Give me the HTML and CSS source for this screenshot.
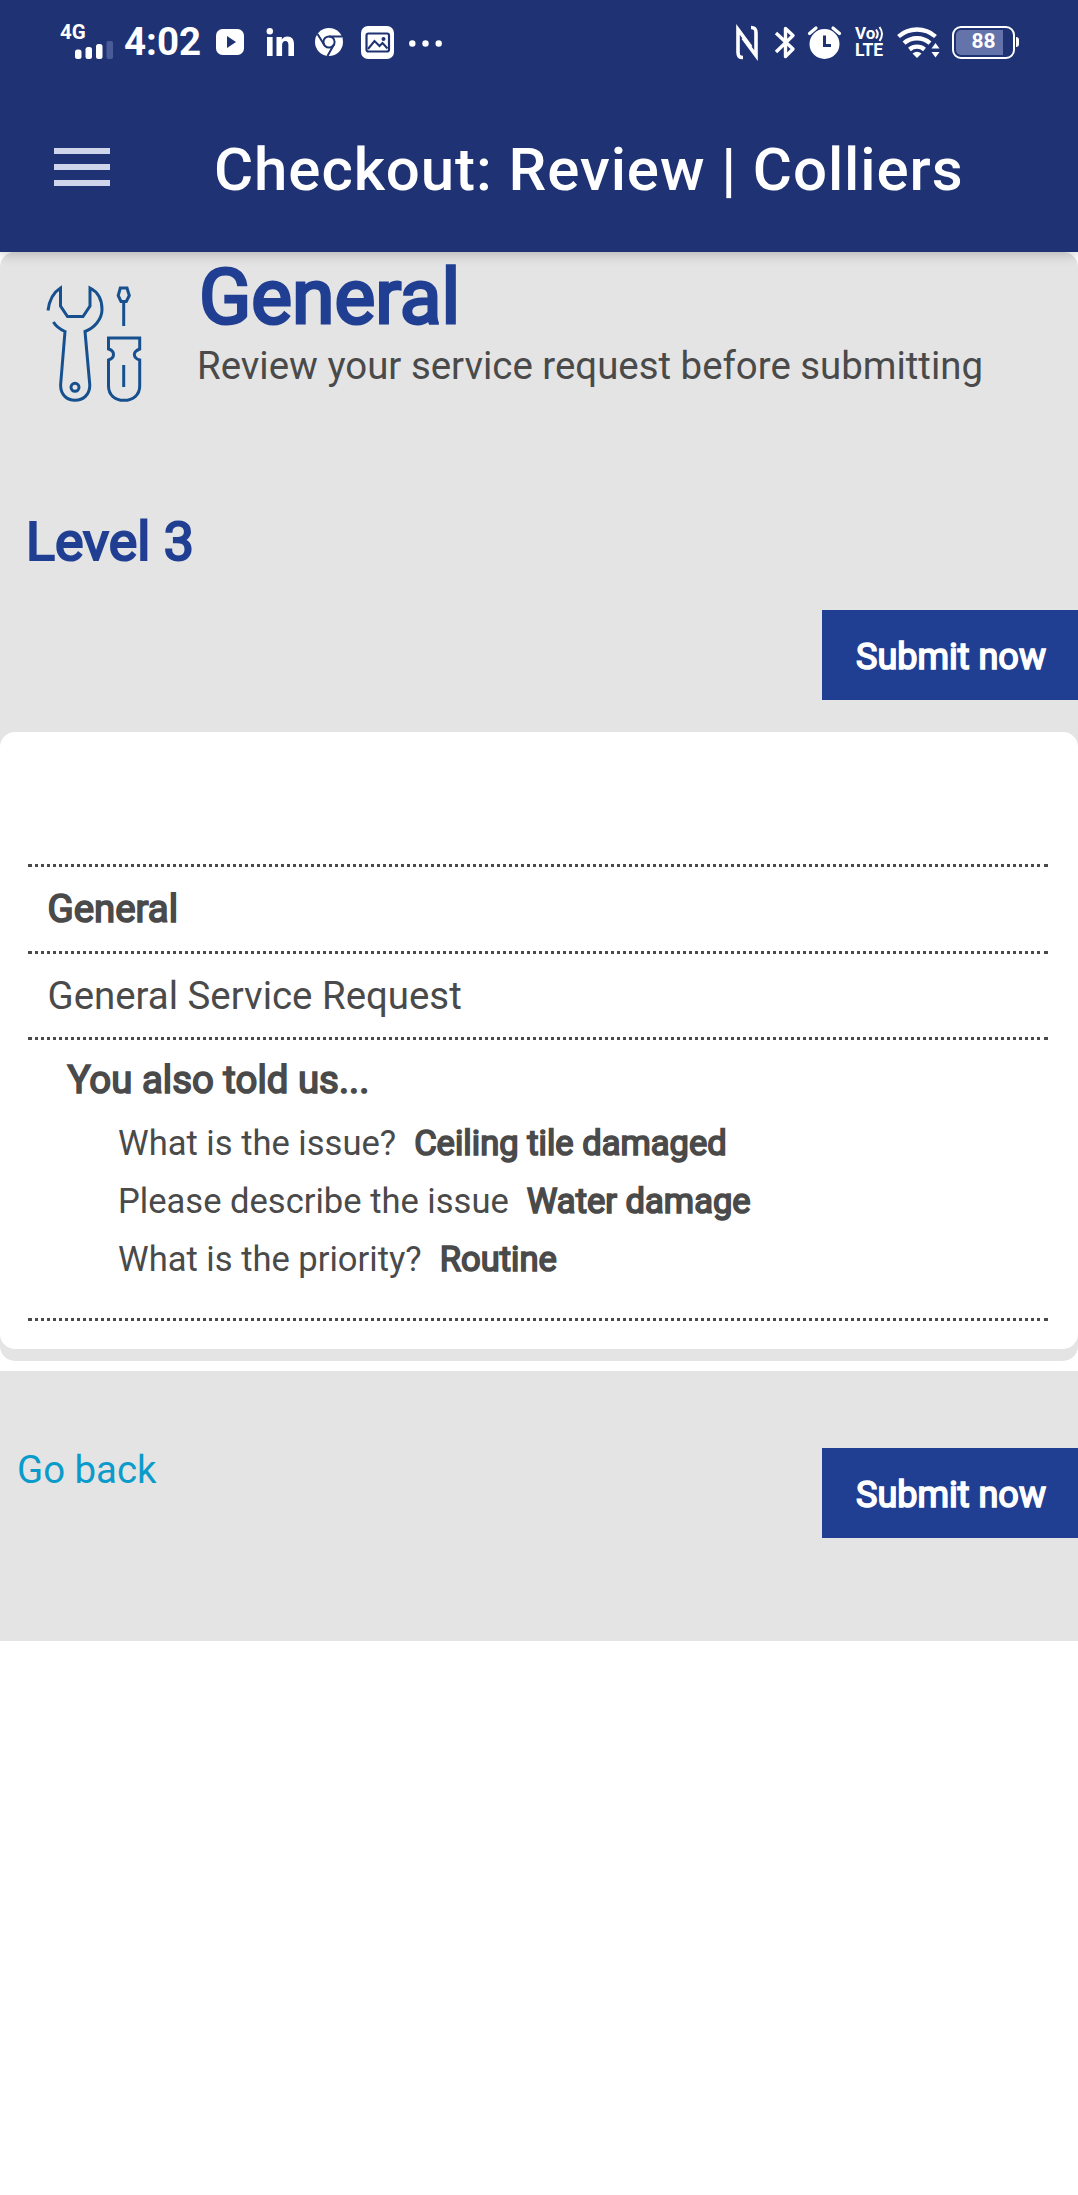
FILE: index.html
```
<!DOCTYPE html>
<html lang="en">
<head>
<meta charset="utf-8">
<title>Checkout: Review | Colliers</title>
<link rel="stylesheet" href="styles.css">
</head>
<body>
<header class="topbar">
  <div class="status">
    <div class="status-side">
      <div class="network">
        <span class="network-type">4G</span>
        <svg class="bars" width="38" height="18" viewBox="0 0 38 18" fill="#fff">
          <rect x="0" y="8.500" width="6.500" height="9.500" rx="2.500"/>
          <rect x="10.500" y="6" width="6.500" height="12" rx="2.500"/>
          <rect x="21" y="3" width="6.500" height="15" rx="2.500"/>
          <rect x="31.500" y="0" width="6.500" height="18" rx="2" fill="#4a5b9a"/>
        </svg>
      </div>
      <span class="clock">4:02</span>
      <svg class="i-play" width="28" height="26" viewBox="0 0 28 26"><rect width="28" height="26" rx="6.500" fill="#fff"/><path d="M11 7l9 6-9 6z" fill="#1e3274"/></svg>
      <svg class="i-in" width="28" height="28" viewBox="0 0 28 28" fill="#fff"><circle cx="3.800" cy="3.200" r="3.200"/><path d="M1 9h5.600v19H1zM10.500 9h5.300v2.600c1.200-2 3.200-3.200 5.700-3.200 4.400 0 6.500 2.900 6.500 7.600v12h-5.600V17.200c0-2.600-1-4.100-3-4.100-2.200 0-3.300 1.600-3.300 4.200V28h-5.600z"/></svg>
      <svg class="i-chrome" width="28" height="28" viewBox="0 0 28 28"><circle cx="14" cy="14" r="14" fill="#fff"/><g fill="none" stroke="#1e3274" stroke-width="2"><circle cx="14" cy="14" r="5.600"/><path d="M14 8.400h13M9.200 16.800L2.500 6M18.800 16.800L12.500 28"/></g></svg>
      <svg class="i-photo" width="33" height="33" viewBox="0 0 33 33"><rect width="33" height="33" rx="7" fill="#fff"/><rect x="5.500" y="7.500" width="22.500" height="18" rx="2" fill="none" stroke="#1e3274" stroke-width="2.200"/><path d="M7 23l6.500-8 5 5 3-3 5 5.500" fill="none" stroke="#1e3274" stroke-width="2"/><circle cx="22.500" cy="13" r="2" fill="#1e3274"/></svg>
      <svg class="i-more" width="33" height="7" viewBox="0 0 33 7" fill="#fff"><circle cx="3.300" cy="3.500" r="3.200"/><circle cx="16.500" cy="3.500" r="3.200"/><circle cx="29.700" cy="3.500" r="3.200"/></svg>
    </div>
    <div class="status-side">
      <svg class="i-nfc" width="22" height="33" viewBox="0 0 22 33" fill="none" stroke="#fff" stroke-width="3.600"><path d="M7 31.500C3 31.500 2 30 2 26V3.500L15 21M15 1.500c4 0 5 1.500 5 5.500v22.500L7 12"/></svg>
      <svg class="i-bt" width="20" height="33" viewBox="0 0 20 33" fill="none" stroke="#fff" stroke-width="3.400" stroke-linejoin="round"><path d="M1 7l17 16-7.500 7.500v-28L18 9.500 1 26"/></svg>
      <svg class="i-alarm" width="33" height="33" viewBox="0 0 33 33"><circle cx="16.500" cy="18" r="15" fill="#fff"/><path d="M1.500 7.500L8 2M31.500 7.500L25 2" stroke="#fff" stroke-width="3.200" stroke-linecap="round"/><path d="M16.500 9.500v10H23" fill="none" stroke="#1e3274" stroke-width="3"/></svg>
      <div class="volte">
        <div class="vo">Vo<svg width="9" height="16" viewBox="0 0 9 16" fill="none" stroke="#fff" stroke-width="2"><path d="M0 3.500q3.500 4.500 0 9M3.500 1q5 7 0 14"/></svg></div>
        <div class="lte">LTE</div>
      </div>
      <svg class="i-wifi" width="43" height="33" viewBox="0 0 43 33" fill="none" stroke="#fff" stroke-width="4.300"><path d="M1.500 10.500a28 28 0 0 1 37 0M7 17.200a19.500 19.500 0 0 1 26 0M12.500 23.500a11.500 11.500 0 0 1 15 0"/><path d="M15.500 27.500q4.500-3.500 9 0L20 32z" fill="#fff" stroke="none"/><path d="M38.500 17l4 5.500h-8zM38.500 31.500l4-5.500h-8z" fill="#fff" stroke="none"/></svg>
      <div class="battery"><div class="battery-fill"></div><span class="battery-level">88</span></div>
    </div>
  </div>
  <div class="appbar">
    <div class="menu"><i></i><i></i><i></i></div>
    <div class="title">Checkout: Review | Colliers</div>
  </div>
</header>
<main>
  <section class="review">
    <div class="intro">
      <svg class="tools" width="98" height="122" viewBox="46 283 98 122" fill="none" stroke="#17508f" stroke-width="3">
        <path d="M48 310.500C49.500 299 54 292 60.500 288V306L67.500 316.500H83L90 306V288C98 292 102 300 102 309.500C102 319.500 94 328 85 331.500L89.800 385C89.800 395 83 400.300 75 400.300S60.600 395 60.600 385L65 331.500Q57 328 53.400 322"/>
        <circle cx="75" cy="387.300" r="4"/>
        <path d="M120.300 288H127L129.300 295.500L126.300 301.500H121L118.200 295.500ZM123.700 301.500V326"/>
        <path d="M108.500 338H139.700V349Q134.500 351 134.300 354.500Q134.500 358.500 139.700 360V386C139.700 395 133 400.300 124 400.300S108.500 395 108.500 386V360Q113.500 358.500 113.500 354.500T108.500 349ZM123.700 365V387"/>
      </svg>
      <div>
        <h1>General</h1>
        <p class="lead">Review your service request before submitting</p>
      </div>
    </div>
    <h2>Level 3</h2>
    <div class="actions"><a class="submit">Submit now</a></div>
    <div class="card">
      <div class="line heavy">General</div>
      <div class="line">General Service Request</div>
      <div class="answers">
        <div class="told heavy">You also told us...</div>
        <div class="qa"><span>What is the issue?</span><b class="heavy">Ceiling tile damaged</b></div>
        <div class="qa"><span>Please describe the issue</span><b class="heavy">Water damage</b></div>
        <div class="qa"><span>What is the priority?</span><b class="heavy">Routine</b></div>
      </div>
    </div>
  </section>
  <section class="footer">
    <a class="back">Go back</a>
    <a class="submit">Submit now</a>
  </section>
</main>
</body>
</html>
```
FILE: styles.css
```
* { box-sizing: border-box; }
body {
  margin: 0;
  background: #fff;
  color: #4a4a4a;
  font: 400 38.4px/1.2 Roboto, sans-serif;
}
svg { display: block; flex: none; overflow: visible; }
h1, h2, p { margin: 0; font-weight: 400; }

.topbar {
  position: relative;
  height: 252px;
  background: #1e3274;
  color: #fff;
  box-shadow: 0 2px 12px rgba(0, 0, 0, .22);
}
.status {
  display: flex;
  justify-content: space-between;
  height: 84px;
  padding: 0 63px 0 60px;
}
.status-side { display: flex; align-items: center; }
.network { width: 54px; padding-bottom: 3px; }
.network-type { display: block; font: 700 20.5px/20px Roboto, sans-serif; }
.bars { margin: -1px 0 0 15px; }
.clock { margin-left: 10px; width: 80px; font: 700 38.5px/84px Roboto, sans-serif; }
.i-play { margin-left: 12px; }
.i-in { margin-left: 22px; }
.i-chrome { margin-left: 21px; }
.i-photo { margin-left: 18px; }
.i-more { margin: 2px 0 0 15px; }
.i-bt { margin-left: 17px; }
.i-alarm { margin-left: 13px; }
.volte { margin-left: 14px; width: 29px; font: 700 17px/16px Roboto, sans-serif; }
.vo { display: flex; gap: 1px; height: 17px; line-height: 15px; }
.lte { height: 15px; font-size: 17.5px; line-height: 15px; }
.i-wifi { margin-left: 13px; }
.battery {
  position: relative;
  display: flex;
  width: 63px;
  height: 33px;
  margin-left: 12px;
  padding: 2px;
  border: 2.5px solid #fff;
  border-radius: 9px;
}
.battery::after {
  content: "";
  position: absolute;
  right: -6px;
  top: 9px;
  width: 3px;
  height: 10px;
  border-radius: 0 3px 3px 0;
  background: #fff;
}
.battery-fill { width: 47px; height: 25px; border-radius: 5px 0 0 5px; background: #6474aa; }
.battery-level {
  position: absolute;
  inset: 0;
  text-align: center;
  font: 700 21px/26px Roboto, sans-serif;
}

.appbar { display: flex; padding-left: 54px; }
.menu { display: flex; flex-direction: column; gap: 10px; width: 56px; padding-top: 64px; }
.menu i { height: 6px; background: #cfd6ec; }
.title {
  height: 168px;
  margin-left: 104px;
  font: 500 60px/172px Roboto, sans-serif;
  letter-spacing: .92px;
  white-space: nowrap;
}

.review { background: #e4e4e4; border-radius: 15px; padding-bottom: 12px; }
.intro { display: flex; height: 234px; padding-left: 46px; }
.tools { margin-top: 31px; }
.intro > div { margin-left: 53px; }
h1 {
  padding-left: 2px;
  font-size: 76.8px;
  line-height: 90px;
  color: #213f92;
  -webkit-text-stroke: 3px #213f92;
}
.lead { line-height: 48px; }
h2 {
  padding-left: 26px;
  height: 124px;
  font-size: 53.76px;
  line-height: 111px;
  color: #213f92;
  -webkit-text-stroke: 2.2px #213f92;
}
.actions { display: flex; justify-content: flex-end; }
.submit {
  width: 256px;
  height: 90px;
  padding-left: 34px;
  background: #213f92;
  color: #fff;
  font-size: 36px;
  line-height: 95px;
  -webkit-text-stroke: 1.7px #fff;
}
.card {
  height: 617px;
  margin-top: 32px;
  padding: 132px 30px 0 28px;
  background: #fff;
  border-radius: 15px;
}
.heavy { font-weight: 400; -webkit-text-stroke: 1.7px #4a4a4a; }
.line {
  height: 86.5px;
  padding-left: 19.5px;
  border-top: 3px dotted #4a4a4a;
  line-height: 83px;
}
.answers {
  height: 284px;
  border-top: 3px dotted #4a4a4a;
  border-bottom: 3px dotted #4a4a4a;
}
.told { padding-left: 39.5px; line-height: 80px; height: 74px; }
.qa {
  display: flex;
  gap: 18px;
  padding-left: 90px;
  font-size: 34.56px;
  line-height: 58px;
}
.footer {
  display: flex;
  justify-content: space-between;
  align-items: flex-start;
  height: 270px;
  margin-top: 10px;
  padding-top: 77px;
  background: #e4e4e4;
}
.back { padding-left: 17px; line-height: 44px; color: #0b9bcb; }
```
